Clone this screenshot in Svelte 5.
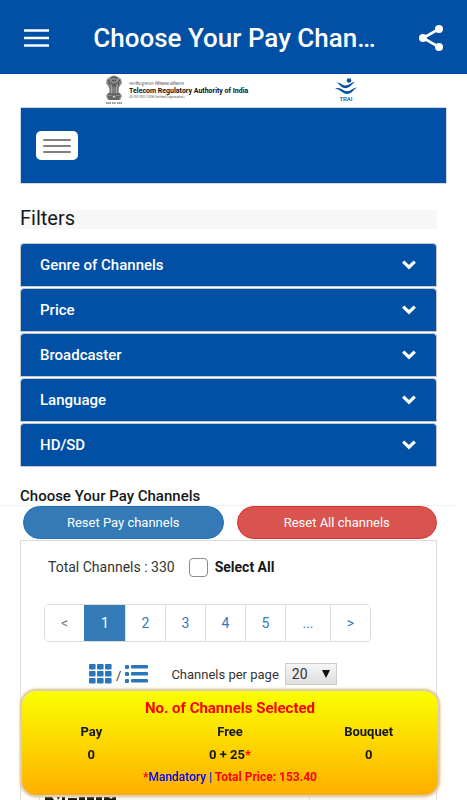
<script>
  const filters = ['Genre of Channels', 'Price', 'Broadcaster', 'Language', 'HD/SD'];
  const pages = ['<', '1', '2', '3', '4', '5', '...', '>'];

  let openFilter = $state('');
  let currentPage = $state('1');
  let selectAll = $state(false);
  let perPage = $state('20');

  function toggle(name) {
    openFilter = openFilter === name ? '' : name;
  }
</script>

<div class="page">
  <header class="app-bar">
    <button class="icon-btn" aria-label="Menu">
      <svg width="26" height="18" viewBox="0 0 26 18">
        <path d="M0 1.500h25M0 9h25M0 16.500h25" stroke="#fff" stroke-width="2.600" />
      </svg>
    </button>
    <h1>Choose Your Pay Chan…</h1>
    <button class="icon-btn" aria-label="Share">
      <svg width="24" height="26" viewBox="0 0 24 26">
        <path d="M20 4 4 13l16 9" fill="none" stroke="#fff" stroke-width="2.600" />
        <circle cx="20" cy="4" r="4" fill="#fff" />
        <circle cx="4" cy="13" r="4" fill="#fff" />
        <circle cx="20" cy="22" r="4" fill="#fff" />
      </svg>
    </button>
  </header>

  <!-- LOGOS -->
  <div class="logos">
    <div class="authority">
      <svg width="18" height="29" viewBox="0 0 18 29">
        <path d="M5 2Q9-1 13 2l3 2 1 4-2 3-2 3H5l-2-3-2-3 1-4z" fill="#888" />
        <path d="M6 3q3-2 6 0M3 5l2 3-1 2M15 5l-2 3 1 2M7 5l2 1 2-1M6 8l3 2 3-2M7 11h4" fill="none" stroke="#333" stroke-width=".8" />
        <path d="M5 12h8v6H5z" fill="#aaa" />
        <path d="M5 12v6M8 12v6M10 12v6M13 12v6" stroke="#555" />
        <path d="M3 18h12l2 3-2 4H3l-2-4z" fill="#888" />
        <path d="M3 19h12M3 22h4M11 22h4M4 24h10" stroke="#444" />
        <circle cx="9" cy="21.500" r="1.500" fill="#ddd" stroke="#333" stroke-width=".6" />
        <path d="M1 28h5M7 28h4M12 28h5" stroke="#333" stroke-width="1.200" stroke-dasharray="1.500 .4" />
      </svg>
      <div class="authority-text">
        <span class="hindi">भारतीय दूरसंचार विनियामक प्राधिकरण</span>
        <strong>Telecom Regulatory Authority of India</strong>
        <span class="iso">(IS/ISO 9001-2008 Certified Organisation)</span>
      </div>
    </div>
    <div class="trai">
      <svg width="22" height="17" viewBox="0 0 22 17">
        <circle cx="14" cy="2.500" r="2.300" fill="#0350a5" />
        <path d="M2 4.500q3 0 5 2 4 2 8-.5 2-2 5-2-3 2-5 4.500-5 3.500-9 0Q4 6 2 4.500z" fill="#0350a5" />
        <path d="M0 10.500q4-1.500 8 1.500 4 2.500 8 0 3-2.500 6-2.500-3 1.500-5 4.500-5 4-10 0-3-3-7-3.500z" fill="#0350a5" />
      </svg>
      <span>TRAI</span>
    </div>
  </div>

  <nav class="site-nav">
    <button class="nav-toggle" aria-label="Toggle navigation">
      <i></i><i></i><i></i>
    </button>
  </nav>

  <!-- FILTERS -->
  <section class="filters">
    <h2>Filters</h2>
    <div class="accordion">
      {#each filters as name}
        <button class="filter" aria-expanded={openFilter === name} onclick={() => toggle(name)}>
          <span>{name}</span>
          <svg width="14" height="10" viewBox="0 0 14 10">
            <path d="M1.200 1.600 7 7.200l5.800-5.600" fill="none" stroke="#fff" stroke-width="3.200" />
          </svg>
        </button>
      {/each}
    </div>
  </section>

  <h3>Choose Your Pay Channels</h3>

  <div class="resets">
    <button class="reset pay">Reset Pay channels</button>
    <button class="reset all">Reset All channels</button>
  </div>

  <!-- CHANNELS -->
  <section class="channels">
    <div class="totals">
      <span>Total Channels : 330</span>
      <input id="select-all" type="checkbox" bind:checked={selectAll} />
      <label for="select-all">Select All</label>
    </div>

    <div class="pagination">
      {#each pages as p}
        <button
          class:active={currentPage === p}
          class:muted={p === '<'}
          class:wide={p === '...'}
          onclick={() => (currentPage = p)}>{p}</button>
      {/each}
    </div>

    <div class="view-row">
      <div class="views">
        <button class="view" aria-label="Grid view">
          <svg width="23" height="20" viewBox="0 0 23 20">
            {#each [0, 7, 14] as y}
              {#each [0, 8, 16] as x}
                <rect {x} {y} width="6.600" height="5.600" rx="1" fill="#2777ba" />
              {/each}
            {/each}
          </svg>
        </button>
        <span>/</span>
        <button class="view" aria-label="List view">
          <svg width="23" height="20" viewBox="0 0 23 20">
            {#each [1, 8, 15] as y}
              <rect x="0" {y} width="4" height="4" rx="1" fill="#2777ba" />
              <rect x="6" {y} width="17" height="3.400" rx="1" fill="#2777ba" />
            {/each}
          </svg>
        </button>
      </div>
      <div class="per-page">
        <label for="per-page">Channels per page</label>
        <div class="select-wrap">
          <select id="per-page" bind:value={perPage}>
            <option>20</option>
            <option>50</option>
            <option>100</option>
          </select>
          <svg width="8" height="8" viewBox="0 0 8 8"><path d="M0 0h8L4 8z" fill="#111" /></svg>
        </div>
      </div>
    </div>

    <div class="channel">
      <svg width="72" height="3" viewBox="0 0 72 3">
        <path d="M0 0h7l2 3H0zM12 0h3l-2 3zM17 0h3v3h-3zM23 1h9v2h-9zM34 0h6v3h-6zM42 0h7v3h-7zM51 0h6v3h-6zM59 0h5l2 2 2-2h3v3H59z" fill="#111" />
      </svg>
    </div>
  </section>

  <aside class="summary">
    <h4>No. of Channels Selected</h4>
    <dl>
      <div><dt>Pay</dt><dd>0</dd></div>
      <div><dt>Free</dt><dd>0 + 25<em>*</em></dd></div>
      <div><dt>Bouquet</dt><dd>0</dd></div>
    </dl>
    <p><em>*</em><b>Mandatory |</b> <em>Total Price: 153.40</em></p>
  </aside>
</div>

<style>
  :global(body) {
    margin: 0;
    background: #fff;
    color: #16181b;
    font-family: Roboto, "Liberation Sans", sans-serif;
  }

  .page, .page * {
    box-sizing: border-box;
  }

  .page {
    min-height: 100vh;
    display: flex;
    flex-direction: column;
  }

  button {
    font-family: inherit;
    border: 0;
    padding: 0;
    cursor: pointer;
  }

  svg {
    display: block;
    flex: none;
  }

  h1, h2, h3, h4, p, dl, dd {
    margin: 0;
  }

  /* ===== APP BAR ===== */
  .app-bar {
    height: 74px;
    padding: 3px 24px 0;
    background: #0150a5;
    border-bottom: 1px solid #0443a0;
    display: flex;
    align-items: center;
    justify-content: space-between;
  }

  .app-bar h1 {
    color: #fff;
    font-size: 26px;
    line-height: 32px;
    font-weight: 500;
    white-space: nowrap;
  }

  .icon-btn {
    background: none;
  }

  /* ===== LOGOS ===== */
  .logos {
    height: 33px;
    padding: 0 100px 2px 105px;
    display: flex;
    justify-content: space-between;
    align-items: center;
  }

  .authority {
    display: flex;
    gap: 6px;
    align-items: center;
  }

  .authority-text {
    display: flex;
    flex-direction: column;
    white-space: nowrap;
  }

  .authority-text strong {
    font-size: 7px;
    line-height: 8px;
    font-weight: 700;
    color: #111;
  }

  .hindi {
    font-size: 4px;
    line-height: 6px;
    color: #333;
  }

  .iso {
    font-size: 3px;
    line-height: 4px;
    color: #555;
  }

  .trai {
    width: 42px;
    display: flex;
    flex-direction: column;
    align-items: center;
    color: #0350a5;
    font-size: 6px;
    line-height: 7px;
    font-weight: 500;
  }

  /* ===== SITE NAV ===== */
  .site-nav {
    margin: 0 20px;
    height: 77px;
    padding: 0 15px;
    background: #0150a5;
    border: 1px solid #d3d9e2;
    display: flex;
    align-items: center;
  }

  .nav-toggle {
    width: 42px;
    height: 29px;
    border-radius: 5px;
    background: #fff;
    display: flex;
    flex-direction: column;
    align-items: center;
    justify-content: center;
    gap: 4px;
  }

  .nav-toggle i {
    width: 28px;
    height: 2px;
    border-radius: 1px;
    background: #808080;
  }

  /* ===== FILTERS ===== */
  .filters {
    margin: 26px 30px 0 20px;
  }

  h2 {
    height: 19px;
    background: #f7f7f7;
    font-size: 20px;
    line-height: 17px;
    font-weight: 400;
  }

  .accordion {
    margin-top: 14px;
    display: flex;
    flex-direction: column;
    gap: 1px;
  }

  .filter {
    height: 44px;
    padding: 0 20px 0 19px;
    border: 1px solid #c4c8ce;
    border-radius: 4px 4px 1px 1px;
    background: #0150a5;
    color: #fff;
    font-size: 15px;
    font-weight: 500;
    display: flex;
    align-items: center;
    justify-content: space-between;
  }

  h3 {
    margin: 20px 10px 0 0;
    padding-left: 20px;
    border-bottom: 1px solid #f0f0f0;
    font-size: 15px;
    line-height: 18px;
    font-weight: 500;
  }

  .resets {
    padding: 0 30px 0 23px;
    display: flex;
    gap: 13px;
  }

  .reset {
    flex: 1;
    height: 33px;
    border-radius: 17px;
    color: #fff;
    font-size: 13px;
  }

  .reset.pay {
    background: #337ab7;
    border: 1px solid #1f6db4;
  }

  .reset.all {
    background: #d9534f;
    border: 1px solid #d8322e;
  }

  /* ===== CHANNELS ===== */
  .channels {
    flex: 1;
    margin: 1px 30px 0 20px;
    border: 1px solid #dcdcdc;
    border-bottom: 0;
    display: flex;
    flex-direction: column;
  }

  .totals {
    margin: 16px 0 0 27px;
    display: flex;
    align-items: center;
    font-size: 14px;
    line-height: 20px;
  }

  .totals span {
    color: #333;
  }

  .totals input {
    appearance: none;
    width: 19px;
    height: 19px;
    margin: 0 7px 0 14px;
    border: 1px solid #8c8c8c;
    border-radius: 4px;
    background: #fff;
  }

  .totals input:checked {
    background: #337ab7;
  }

  .totals label {
    font-weight: 700;
  }

  .pagination {
    margin: 27px 0 0 23px;
    align-self: flex-start;
    display: flex;
    border: 1px solid #dcdcdc;
    border-radius: 5px;
    overflow: hidden;
  }

  .pagination button {
    width: 40px;
    height: 36px;
    background: #fff;
    border-left: 1px solid #dcdcdc;
    color: #337ab7;
    font-size: 14px;
  }

  .pagination button:first-child {
    width: 39px;
    border-left: 0;
  }

  .pagination .wide {
    width: 45px;
  }

  .pagination .muted {
    color: #777;
  }

  .pagination .active {
    width: 41px;
    background: #337ab7;
    border-color: #337ab7;
    color: #fff;
  }

  .view-row {
    margin: 21px 0 0 68px;
    display: flex;
    align-items: center;
    gap: 23px;
    font-size: 13px;
    color: #333;
  }

  .views {
    display: flex;
    align-items: flex-end;
    gap: 4px;
    line-height: 16px;
  }

  .view {
    background: none;
  }

  .per-page {
    display: flex;
    align-items: center;
    gap: 6px;
  }

  .select-wrap {
    display: grid;
    align-items: center;
  }

  .select-wrap > * {
    grid-area: 1 / 1;
  }

  .select-wrap svg {
    justify-self: end;
    margin-right: 7px;
    pointer-events: none;
  }

  select {
    appearance: none;
    width: 52px;
    height: 22px;
    padding: 0 6px;
    border: 1px solid #ccc;
    border-radius: 0;
    background: linear-gradient(#f6f6f6, #dedede);
    color: #333;
    font-family: inherit;
    font-size: 14px;
  }

  .channel {
    flex: 1;
    margin: 14px 126px 0 18px;
    padding: 0 5px;
    border: 1px solid #ddd;
    border-bottom: 0;
    display: flex;
    align-items: flex-end;
  }

  /* ===== SUMMARY ===== */
  .summary {
    position: fixed;
    left: 20px;
    right: 27px;
    bottom: 3px;
    padding: 8px 0 9px;
    border: 2px solid #d8cfc0;
    border-radius: 16px;
    background: linear-gradient(#faff00, #ffae00);
    box-shadow: 0 0 3px #f0b96a;
    text-align: center;
    font-weight: 700;
  }

  .summary h4 {
    color: #f00;
    font-size: 15px;
    line-height: 18px;
    font-weight: 700;
  }

  .summary dl {
    display: grid;
    grid-template-columns: repeat(3, 1fr);
    font-size: 13px;
    line-height: 23px;
    margin-top: 3px;
  }

  .summary p {
    margin-top: 2px;
    font-size: 12px;
    line-height: 18px;
    font-weight: 700;
  }

  .summary em {
    color: #f00;
    font-style: normal;
  }

  .summary b {
    color: #00f;
    font-weight: 500;
  }
</style>
